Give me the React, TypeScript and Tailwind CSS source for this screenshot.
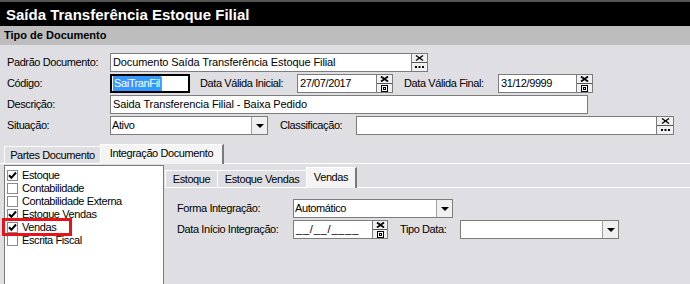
const XMark: React.FC<{ bold?: boolean }> = ({ bold }) => (
  <svg width="9" height="6" viewBox="0 0 9 6" className="block">
    <path
      d="M1 0.5 L8 5.5 M8 0.5 L1 5.5"
      stroke="#000"
      strokeWidth={bold ? 1.8 : 1.3}
      fill="none"
    />
  </svg>
);

const Dots = () => (
  <svg width="9" height="3" viewBox="0 0 9 3" className="block">
    <rect x="0" y="0" width="2" height="2" fill="#000" />
    <rect x="3.5" y="0" width="2" height="2" fill="#000" />
    <rect x="7" y="0" width="2" height="2" fill="#000" />
  </svg>
);

const Calendar = () => (
  <svg width="7" height="7" viewBox="0 0 7 7" className="block">
    <rect x="0.5" y="0.5" width="6" height="6" fill="#fff" stroke="#000" />
    <rect x="2" y="2" width="3" height="3" fill="#000" />
    <rect x="3" y="3" width="1" height="1" fill="#fff" />
  </svg>
);

const SideButton: React.FC<{ kind: "lookup" | "date"; className?: string }> = ({
  kind,
  className,
}) => (
  <div
    className={`flex flex-col border border-l-0 border-[#7c7c7c] bg-[#f0f0f0] ${className ?? "w-[16px]"}`}
  >
    <div className="flex flex-1 items-center justify-center border-b border-[#555]">
      <XMark bold={kind === "date"} />
    </div>
    <div className="flex flex-1 items-center justify-center">
      {kind === "lookup" ? <Dots /> : <Calendar />}
    </div>
  </div>
);

const DropArrow = () => (
  <div className="flex w-[16px] items-center justify-center border-l border-[#a0a0a0] bg-[#f0f0f0]">
    <svg width="8" height="4" viewBox="0 0 8 4" className="block">
      <path d="M0 0 H8 L4 4 Z" fill="#000" />
    </svg>
  </div>
);

const Label: React.FC<{ className?: string; children: React.ReactNode }> = ({
  className,
  children,
}) => (
  <div className={`flex shrink-0 items-center whitespace-nowrap ${className ?? ""}`}>
    {children}
  </div>
);

const Box: React.FC<{ className?: string; children?: React.ReactNode }> = ({
  className,
  children,
}) => (
  <div
    className={`flex shrink-0 items-center overflow-hidden whitespace-nowrap border border-[#7c7c7c] bg-white pl-[2px] ${className ?? ""}`}
  >
    {children}
  </div>
);

const Select: React.FC<{ className?: string; value?: string }> = ({
  className,
  value,
}) => (
  <div
    className={`flex shrink-0 border border-[#7c7c7c] bg-white ${className ?? ""}`}
  >
    <div className="flex flex-1 items-center whitespace-nowrap pl-[1px]">
      {value}
    </div>
    <DropArrow />
  </div>
);

const Check: React.FC<{ label: string; checked?: boolean }> = ({
  label,
  checked,
}) => (
  <div className="flex h-[13px] items-center gap-[4px] whitespace-nowrap">
    <div className="flex h-[11px] w-[11px] items-center justify-center border border-[#8a8a8a] bg-white">
      {checked && (
        <svg width="9" height="9" viewBox="0 0 9 9" className="block">
          <path
            d="M1 4.2 L3.4 6.8 L8 1.5"
            stroke="#000"
            strokeWidth="2"
            fill="none"
          />
        </svg>
      )}
    </div>
    <span>{label}</span>
  </div>
);

export default function App() {
  return (
    <div className="h-[284px] w-[690px] overflow-hidden bg-[#dfdfe3] font-['Liberation_Sans',Arial,sans-serif] text-[11px] leading-none tracking-[-0.4px] text-black">
      <div className="flex h-[26px] items-center border-t-2 border-[#555] bg-black pl-[6px] pt-[1px] text-[15px] font-bold tracking-normal text-white">
        Saída Transferência Estoque Filial
      </div>
      <div className="flex h-[19px] items-center bg-[#bdbdbd] pl-[4px] text-[11px] font-bold tracking-normal">
        Tipo de Documento
      </div>

      <div className="flex flex-col gap-[2px] pl-[7px] pt-[8px]">
        <div className="flex h-[19px]">
          <Label className="w-[103px]">Padrão Documento:</Label>
          <Box className="w-[302px] bg-[#f0f0f0] tracking-[-0.1px]">
            Documento Saída Transferência Estoque Filial
          </Box>
          <SideButton kind="lookup" />
        </div>

        <div className="flex h-[19px]">
          <Label className="w-[103px]">Código:</Label>
          <div className="flex w-[80px] items-center border-2 border-black bg-white pl-[1px]">
            <span className="bg-[#3399ff] px-[1px] py-[2px] text-white">SaiTranFil</span>
            <span className="h-[14px] w-[1px] bg-[#f08010]" />
          </div>
          <Label className="ml-[10px] w-[97px]">Data Válida Inicial:</Label>
          <Box className="w-[80px]">27/07/2017</Box>
          <SideButton kind="date" />
          <Label className="ml-[11px] w-[94px]">Data Válida Final:</Label>
          <Box className="w-[79px]">31/12/9999</Box>
          <SideButton kind="date" />
        </div>

        <div className="flex h-[19px]">
          <Label className="w-[103px]">Descrição:</Label>
          <Box className="w-[478px] tracking-[-0.1px]">
            Saida Transferencia Filial - Baixa Pedido
          </Box>
        </div>

        <div className="flex h-[19px]">
          <Label className="w-[103px]">Situação:</Label>
          <Select className="w-[158px]" value="Ativo" />
          <Label className="ml-[12px] w-[76px]">Classificação:</Label>
          <Box className="w-[301px]" />
          <SideButton kind="lookup" className="w-[17px]" />
        </div>
      </div>

      <div className="mt-[9px] flex h-[19px] items-end whitespace-nowrap pl-[4px]">
        <div className="flex h-[17px] w-[96px] items-center justify-center border-l border-t border-white">
          Partes Documento
        </div>
        <div className="relative z-10 -mb-[1px] flex h-[20px] w-[124px] items-center justify-center border-l border-t border-r-2 border-white border-r-[#7a7a7a] bg-[#f4f4f4] pb-[2px]">
          Integração Documento
        </div>
      </div>

      <div className="flex border-t border-white pl-[4px] pt-[1px]">
        <div className="relative h-[130px] w-[160px] shrink-0 border border-[#7a7a7a] bg-white pl-[2px] pt-[3px]">
          <Check label="Estoque" checked />
          <Check label="Contabilidade" />
          <Check label="Contabilidade Externa" />
          <Check label="Estoque Vendas" checked />
          <Check label="Vendas" checked />
          <Check label="Escrita Fiscal" />
          <div className="absolute left-[-3px] top-[52px] h-[18px] w-[70px] border-[3px] border-[#e8121b]" />
        </div>

        <div className="flex flex-1 flex-col pl-[1px]">
          <div className="flex h-[23px] items-end whitespace-nowrap border-b border-white">
            <div className="flex h-[17px] w-[52px] items-center justify-center border-l border-t border-white">
              Estoque
            </div>
            <div className="flex h-[17px] w-[89px] items-center justify-center border-l border-t border-white">
              Estoque Vendas
            </div>
            <div className="relative z-10 -mb-[1px] flex h-[21px] w-[51px] items-center justify-center border-l border-t border-r-2 border-white border-r-[#7a7a7a] bg-[#f4f4f4] pb-[2px]">
              Vendas
            </div>
          </div>

          <div className="flex flex-col gap-[2px] pl-[12px] pt-[11px]">
            <div className="flex h-[19px]">
              <Label className="w-[116px]">Forma Integração:</Label>
              <Select className="w-[160px]" value="Automático" />
            </div>
            <div className="flex h-[19px]">
              <Label className="w-[116px]">Data Início Integração:</Label>
              <Box className="w-[80px] tracking-[0.8px]">__/__/____</Box>
              <SideButton kind="date" className="w-[15px]" />
              <Label className="ml-[12px] w-[60px]">Tipo Data:</Label>
              <Select className="w-[159px]" />
            </div>
          </div>
        </div>
      </div>
    </div>
  );
}
